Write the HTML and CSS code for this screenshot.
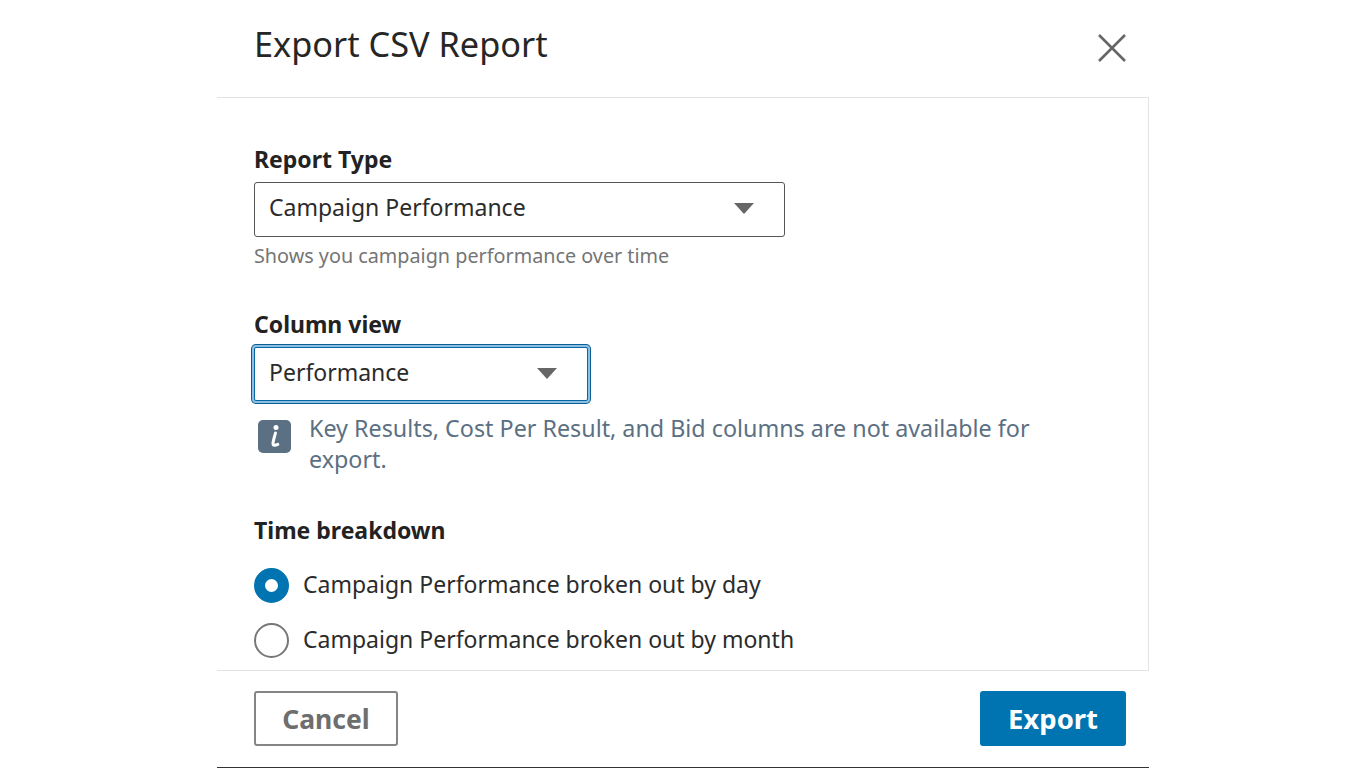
FILE: index.html
```html
<!DOCTYPE html>
<html lang="en">
<head>
<meta charset="utf-8">
<title>Export CSV Report</title>
<link rel="stylesheet" href="styles.css">
</head>
<body>
<div class="dialog">
  <header class="head">
    <h1 class="title">Export CSV Report</h1>
    <svg class="close" width="30" height="30" viewBox="0 0 30 30" aria-label="Close"><path d="M2 2 L28 28 M28 2 L2 28" fill="none" stroke="#666" stroke-width="2.6"/></svg>
  </header>
  <main class="content">
    <section class="field report">
      <div class="label">Report Type</div>
      <div class="select select-wide"><span>Campaign Performance</span><i class="caret"></i></div>
      <div class="hint">Shows you campaign performance over time</div>
    </section>
    <section class="field column">
      <div class="label">Column view</div>
      <div class="select select-focus"><span>Performance</span><i class="caret"></i></div>
      <div class="notice">
        <svg class="info" width="33" height="33" viewBox="0 0 33 33"><rect width="33" height="33" rx="5" fill="#5b7083"/><circle cx="18" cy="7.5" r="2.5" fill="#fff"/><path d="M17.5 13 C16.5 17 15 21 15 23.5 C15 25.7 17 25.7 19.8 24.3" fill="none" stroke="#fff" stroke-width="3" stroke-linecap="round"/></svg>
        <p>Key Results, Cost Per Result, and Bid columns are not available for export.</p>
      </div>
    </section>
    <section class="field time">
      <div class="label">Time breakdown</div>
      <div class="radio-row"><i class="radio radio-on"></i><span>Campaign Performance broken out by day</span></div>
      <div class="radio-row"><i class="radio"></i><span>Campaign Performance broken out by month</span></div>
    </section>
  </main>
  <footer class="foot">
    <button class="btn btn-cancel">Cancel</button>
    <button class="btn btn-export">Export</button>
  </footer>
</div>
</body>
</html>
```
FILE: styles.css
```css
* { box-sizing: border-box; }
html, body { margin: 0; height: 768px; background: #fff; overflow: hidden; }
body { font-family: "Noto Sans", "Open Sans", sans-serif; color: #222; }
.dialog { width: 932px; height: 768px; margin-left: 217px; display: flex; flex-direction: column; border-bottom: 1px solid #333; }
.head { height: 98px; flex: none; border-bottom: 1px solid #e3e3e3; padding: 23px 22px 0 37px; display: flex; justify-content: space-between; align-items: flex-start; }
.title { margin: 0; font-size: 34.3px; line-height: 42px; font-weight: 400; color: #262626; }
.close { margin-top: 10px; }
.content { flex: 1; border-right: 1px solid #e3e3e3; padding: 46px 37px 0; overflow: hidden; }
.label { font-size: 23px; line-height: 30px; font-weight: 700; color: #222; }
.select { height: 55px; margin-top: 8px; border: 1px solid #555; border-radius: 3px; display: flex; align-items: center; justify-content: space-between; padding: 0 30px 0 14px; font-size: 23px; color: #2b2b2b; }
.select span { padding-bottom: 5px; }
.select-wide { width: 531px; }
.select-focus { width: 334px; height: 54px; border-color: #0a66a0; box-shadow: 0 0 0 2px #8bbfe3, 0 0 0 3px #0a5f95; border-radius: 2px; }
.caret { width: 0; height: 0; margin-bottom: 2px; border-left: 10.5px solid transparent; border-right: 10.5px solid transparent; border-top: 11px solid #666; }
.hint { margin-top: 5px; font-size: 19.8px; line-height: 28px; color: #757575; }
.column { margin-top: 39px; }
.notice { display: flex; gap: 18px; margin: 12px 0 0 4px; width: 790px; }
.info { flex: none; margin-top: 7px; }
.notice p { margin: 0; font-size: 23.3px; line-height: 31px; color: #5b7083; }
.time { margin-top: 40px; }
.radio-row { display: flex; align-items: center; gap: 14px; height: 36px; margin-top: 19px; font-size: 23px; color: #2b2b2b; }
.radio-row span { padding-bottom: 2px; }
.time .label + .radio-row { margin-top: 22px; }
.radio { width: 35px; height: 35px; border-radius: 50%; border: 2px solid #777; flex: none; }
.radio-on { border: 11px solid #0073b1; }
.foot { height: 97px; flex: none; border-top: 1px solid #e3e3e3; padding: 20px 23px 0 37px; display: flex; justify-content: space-between; align-items: flex-start; }
.btn { height: 55px; font-family: inherit; font-weight: 700; border-radius: 3px; }
.btn-cancel { width: 144px; font-size: 26.5px; background: #fff; color: #6e6e6e; border: 2px solid #858585; }
.btn-export { width: 146px; font-size: 27.5px; background: #0073b1; color: #fff; border: none; }
```
